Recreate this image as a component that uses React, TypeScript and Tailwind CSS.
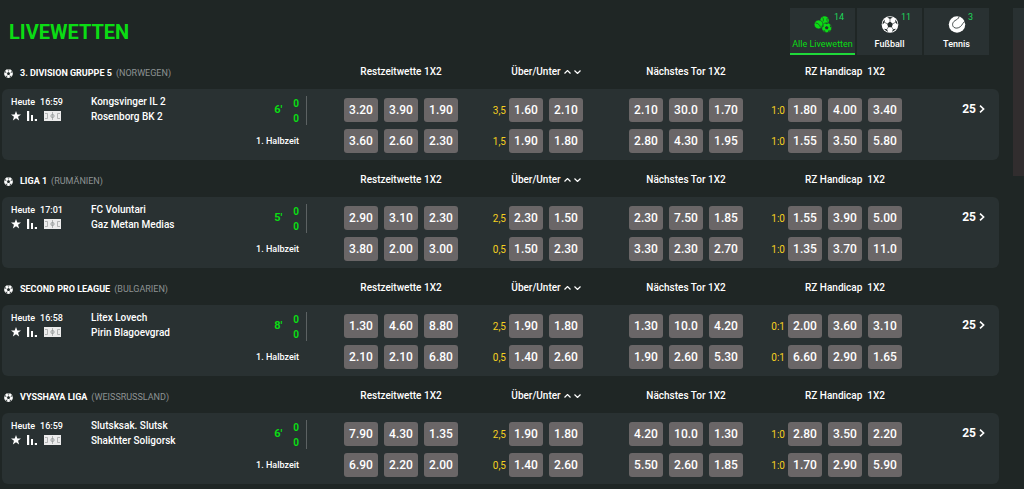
import React from 'react';

interface Market {
  line?: string;
  odds: string[];
}

interface League {
  name: string;
  country: string;
  time: string;
  home: string;
  away: string;
  minute: string;
  more: number;
  // one entry per row: full time first, then the first half
  rows: Market[][];
}

const row = (a: string, line: string, b: string, c: string, handicap: string, d: string): Market[] => [
  { odds: a.split(' ') },
  { line, odds: b.split(' ') },
  { odds: c.split(' ') },
  { line: handicap, odds: d.split(' ') },
];

const leagues: League[] = [
  {
    name: '3. DIVISION GRUPPE 5',
    country: 'NORWEGEN',
    time: '16:59',
    home: 'Kongsvinger IL 2',
    away: 'Rosenborg BK 2',
    minute: "6'",
    more: 25,
    rows: [
      row('3.20 3.90 1.90', '3,5', '1.60 2.10', '2.10 30.0 1.70', '1:0', '1.80 4.00 3.40'),
      row('3.60 2.60 2.30', '1,5', '1.90 1.80', '2.80 4.30 1.95', '1:0', '1.55 3.50 5.80'),
    ],
  },
  {
    name: 'LIGA 1',
    country: 'RUMÄNIEN',
    time: '17:01',
    home: 'FC Voluntari',
    away: 'Gaz Metan Medias',
    minute: "5'",
    more: 25,
    rows: [
      row('2.90 3.10 2.30', '2,5', '2.30 1.50', '2.30 7.50 1.85', '1:0', '1.55 3.90 5.00'),
      row('3.80 2.00 3.00', '0,5', '1.50 2.30', '3.30 2.30 2.70', '1:0', '1.35 3.70 11.0'),
    ],
  },
  {
    name: 'SECOND PRO LEAGUE',
    country: 'BULGARIEN',
    time: '16:58',
    home: 'Litex Lovech',
    away: 'Pirin Blagoevgrad',
    minute: "8'",
    more: 25,
    rows: [
      row('1.30 4.60 8.80', '2,5', '1.90 1.80', '1.30 10.0 4.20', '0:1', '2.00 3.60 3.10'),
      row('2.10 2.10 6.80', '0,5', '1.40 2.60', '1.90 2.60 5.30', '0:1', '6.60 2.90 1.65'),
    ],
  },
  {
    name: 'VYSSHAYA LIGA',
    country: 'WEISSRUSSLAND',
    time: '16:59',
    home: 'Slutsksak. Slutsk',
    away: 'Shakhter Soligorsk',
    minute: "6'",
    more: 25,
    rows: [
      row('7.90 4.30 1.35', '2,5', '1.90 1.80', '4.20 10.0 1.30', '1:0', '2.80 3.50 2.20'),
      row('6.90 2.20 2.00', '0,5', '1.40 2.60', '5.50 2.60 1.85', '1:0', '1.70 2.90 5.90'),
    ],
  },
];

const columns = 'grid grid-cols-[minmax(0,1fr)_141px_144px_135px_138px_97px]';

function Football({ className }: { className: string }) {
  return (
    <svg className={className} viewBox="0 0 20 20" aria-hidden="true">
      <circle cx="10" cy="10" r="9.8" fill="currentColor" />
      <path
        fill="#232b2b"
        d="m10 6.600 3.400 2.500-1.300 4H7.900l-1.300-4zM6.600 1.900l3.400 1.500 3.400-1.500C11.300 1 8.700 1 6.600 1.900zM1.200 9.900l2.500-2.400.1-3.500C2.100 5.700 1.200 7.700 1.200 9.900zM18.800 9.900l-2.500-2.400-.1-3.500c1.700 1.700 2.600 3.700 2.600 5.900zM3 15.100l3.500.4 1.200 3.100C5.800 18 4.200 16.800 3 15.100zM17 15.100l-3.500.4-1.200 3.100c1.900-.6 3.500-1.800 4.700-3.500z"
      />
      <path d="M10 3.400v3.200M3.700 7.500l2.900 1.600M16.300 7.500l-2.900 1.600M6.500 15.500l1.400-2.400M13.500 15.500l-1.400-2.400" stroke="#232b2b" strokeWidth=".7" />
    </svg>
  );
}

function TennisBall({ className }: { className: string }) {
  return (
    <svg className={className} viewBox="0 0 20 20" aria-hidden="true">
      <circle cx="10" cy="10" r="9.7" fill="currentColor" />
      <path
        d="M12.500.5C12 3.500 9.500 4.200 7.500 5.500 4.500 7.500 4 11 6 13s5.500 1.500 8-.5c2.500-2 3-5.500 5.500-6"
        fill="none"
        stroke="#293132"
        strokeWidth="1"
      />
    </svg>
  );
}

function AllSports({ className }: { className: string }) {
  return (
    <svg className={className} viewBox="0 0 18 17" aria-hidden="true">
      <circle cx="10.5" cy="4.500" r="4.300" fill="currentColor" />
      <path d="M8.500 1.500c1 1 1.200 2.500.5 4M13.500 2c-.8 1-.8 2.500 0 3.500" fill="none" stroke="#293132" strokeWidth=".7" />
      <circle cx="4.600" cy="8.500" r="4.400" fill="currentColor" stroke="#293132" strokeWidth=".6" />
      <path d="M1.500 7c2.500 0 4.500 2 5 4.500" fill="none" stroke="#293132" strokeWidth=".7" />
      <circle cx="12.700" cy="11.700" r="5" fill="currentColor" stroke="#293132" strokeWidth=".6" />
      <path
        fill="#293132"
        d="m12.700 9.900 1.800 1.300-.7 2.100h-2.200l-.7-2.100zM11 7.500l1.700.8 1.700-.8c-1-.4-2.400-.4-3.400 0zM8.200 11.700l1.300-1.200V8.700c-.9.8-1.300 1.800-1.300 3zM17.200 11.700l-1.300-1.200V8.700c.9.8 1.300 1.800 1.300 3zM9.200 14.400l1.700.2.600 1.500c-1-.3-1.700-.9-2.300-1.700zM16.200 14.400l-1.700.2-.6 1.500c1-.3 1.700-.9 2.300-1.700z"
      />
    </svg>
  );
}

function Pitch() {
  return (
    <svg className="h-[10px] w-[17px]" viewBox="0 0 17 10" aria-hidden="true">
      <path fill="#ececec" d="M0 0h17v10H0z" />
      <path d="M8.500 1v8M1 2.500h2.500v5H1M16 2.500h-2.500v5H16" fill="none" stroke="#a3a6a6" strokeWidth=".8" />
      <circle cx="8.500" cy="5" r="1.600" fill="none" stroke="#8b9090" strokeWidth=".8" />
    </svg>
  );
}

function Tab({ label, count, active, children }: { label: string; count: number; active?: boolean; children: React.ReactNode }) {
  return (
    <button
      type="button"
      className={`relative flex h-[47px] w-[65px] flex-col items-center border-b-2 bg-[#293132] pt-[8px] text-[9px] leading-[12px] ${
        active ? 'border-[#1fd83a] text-[#0bdc14]' : 'border-[#293132] font-medium text-white'
      }`}
    >
      {children}
      <span className="mt-[5px] whitespace-nowrap">{label}</span>
      <span className="absolute left-[44px] top-[3px] font-normal text-[#1fd85a]">{count}</span>
    </button>
  );
}

function MarketHeader({ title, line, wide = true }: { title: React.ReactNode; line?: boolean; wide?: boolean }) {
  return (
    <div className={line ? 'pl-[24px]' : ''}>
      <div className={`flex items-center justify-center whitespace-pre ${wide ? 'w-[114px]' : 'w-[74px]'}`}>{title}</div>
    </div>
  );
}

function OddsGroup({ market }: { market: Market }) {
  return (
    <div className="flex items-center">
      {market.line && <span className="mr-[3px] w-[21px] text-right text-[10px] text-[#f5d020]">{market.line}</span>}
      <div className="flex gap-[6px]">
        {market.odds.map((odd, index) => (
          <button
            key={index}
            type="button"
            className="h-[24px] w-[34px] rounded-[3px] bg-[#6a6667] text-[12px] font-medium text-white hover:bg-[#7a7677]"
          >
            {odd}
          </button>
        ))}
      </div>
    </div>
  );
}

function LeagueBlock({ league }: { league: League }) {
  return (
    <section className="mb-[4px]">
      <header className={`${columns} h-[33px] text-[10px] font-medium leading-[32px]`}>
        <h2 className="flex items-center pt-[1px] text-[9px] font-bold">
          <Football className="ml-[2px] mr-[7px] size-[9px]" />
          {league.name}
          <span className="ml-[4px] font-normal text-[#8d9293]">({league.country})</span>
        </h2>
        <MarketHeader title="Restzeitwette 1X2" />
        <MarketHeader
          line
          wide={false}
          title={
            <>
              Über/Unter
              <button type="button" aria-label="Vorherige Linie" className="ml-[3px]">
                <svg className="h-[4px] w-[7px]" viewBox="0 0 7 4" fill="none" stroke="currentColor" strokeWidth="1.2">
                  <path d="m.5 3.500 3-3 3 3" />
                </svg>
              </button>
              <button type="button" aria-label="Nächste Linie" className="ml-[3px]">
                <svg className="h-[4px] w-[7px]" viewBox="0 0 7 4" fill="none" stroke="currentColor" strokeWidth="1.2">
                  <path d="m.5.5 3 3 3-3" />
                </svg>
              </button>
            </>
          }
        />
        <MarketHeader title="Nächstes Tor 1X2" />
        <MarketHeader line title="RZ Handicap  1X2" />
      </header>

      <div className="rounded-[6px] bg-[#293132] pb-[7px] pt-[9px]">
        <div className={`${columns} items-start gap-y-[7px]`}>
          <div className="flex h-[24px] pl-[9px]">
            <div className="w-[80px] shrink-0">
              <div className="flex gap-[5px] text-[9px] font-medium leading-[8px]">
                <span>Heute</span>
                <span>{league.time}</span>
              </div>
              <div className="mt-[5px] flex items-center">
                <button type="button" aria-label="Favorit">
                  <svg className="size-[10px]" viewBox="0 0 20 20" fill="currentColor">
                    <path d="m10 0 2.600 7H20l-5.900 4.500L16.300 19 10 14.600 3.700 19l2.200-7.500L0 7h7.400z" />
                  </svg>
                </button>
                <button type="button" aria-label="Statistik" className="ml-[6px]">
                  <svg className="size-[10px]" viewBox="0 0 10 10" fill="currentColor">
                    <path d="M0 0h2.200v10H0zM4 4h2v6H4zM7.800 8H10v2H7.800z" />
                  </svg>
                </button>
                <button type="button" aria-label="Spielfeld" className="ml-[7px]">
                  <Pitch />
                </button>
              </div>
            </div>
            <a href="#" className="-mt-[4px] block min-w-0 flex-1 whitespace-nowrap text-[10px] font-medium leading-[15px]">
              {league.home}
              <br />
              {league.away}
            </a>
            <div className="-mt-[2px] mr-[37px] flex h-[29px] shrink-0 items-center border-r border-[#5c6263] pr-[7px] font-bold text-[#0bdc14]">
              <span className="mr-[11px] text-[11px]">{league.minute}</span>
              <div className="text-[10px] leading-[15px]">
                <div>0</div>
                <div>0</div>
              </div>
            </div>
          </div>
          {league.rows[0].map((market, index) => (
            <OddsGroup key={index} market={market} />
          ))}
          <a href="#" className="flex items-center justify-end gap-[3px] pr-[14px] text-[12px] font-bold leading-[22px]">
            {league.more}
            <svg className="h-[8px] w-[6px]" viewBox="0 0 6 8" fill="none" stroke="currentColor" strokeWidth="1.6" aria-hidden="true">
              <path d="m1 .6 3.600 3.400L1 7.400" />
            </svg>
          </a>

          <div className="pr-[45px] text-right text-[9px] font-medium leading-[24px]">1. Halbzeit</div>
          {league.rows[1].map((market, index) => (
            <OddsGroup key={index} market={market} />
          ))}
        </div>
      </div>
    </section>
  );
}

export default function App() {
  return (
    <div className="flex min-h-screen items-start bg-[#1f2625] font-[Roboto,sans-serif] text-white">
      <main className="min-w-0 flex-1 pl-[2px]">
        <div className="flex h-[56px] items-start justify-between pl-[7px] pr-[10px] pt-[8px]">
          <h1 className="pt-[10px] text-[20px] font-bold leading-[28px] text-[#0bdc14]">LIVEWETTEN</h1>
          <nav className="flex gap-[2px]" aria-label="Sportarten">
            <Tab label="Alle Livewetten" count={14} active>
              <AllSports className="h-[17px] w-[18px]" />
            </Tab>
            <Tab label="Fußball" count={11}>
              <Football className="h-[17px] w-[18px]" />
            </Tab>
            <Tab label="Tennis" count={3}>
              <TennisBall className="h-[17px] w-[18px]" />
            </Tab>
          </nav>
        </div>
        {leagues.map((league) => (
          <LeagueBlock key={league.name} league={league} />
        ))}
      </main>
      <aside className="ml-[14px] mt-[8px] h-[168px] w-[11px] shrink-0 border-t-[32px] border-[#293132] bg-[#312d2e]" />
    </div>
  );
}
